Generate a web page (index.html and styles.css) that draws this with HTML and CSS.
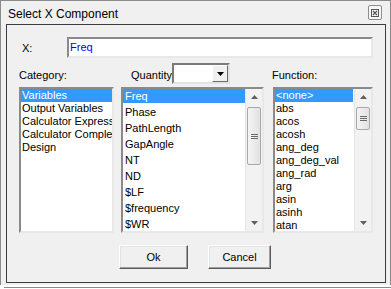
FILE: index.html
```html
<!DOCTYPE html>
<html lang="en">
<head>
  <meta charset="UTF-8">
  <title>Select X Component</title>
  <link rel="stylesheet" href="styles.css">
</head>
<body>
  <div class="window">
    <div class="titlebar">
      <span class="title">Select X Component</span>
      <span class="close">
        <svg width="8" height="8" viewBox="0 0 8 8">
          <rect x="0.5" y="0.5" width="7" height="7" fill="none" stroke="#555"/>
          <path d="M2 2 L6 6 M6 2 L2 6" stroke="#555" stroke-width="1.2"/>
        </svg>
      </span>
    </div>
    <div class="panel">
      <div class="x-row">
        <span class="x-label">X:</span>
        <div class="field">Freq</div>
      </div>
      <div class="grid">
        <div class="lbl">Category:</div>
        <div class="lbl qty-lbl">
          <span class="qty-text">Quantity</span>
          <div class="combo">
            <span class="combo-val"></span>
            <span class="combo-btn">
              <svg width="7" height="4" viewBox="0 0 7 4"><path d="M0 0 H7 L3.5 4 Z" fill="#000"/></svg>
            </span>
          </div>
        </div>
        <div class="lbl fn-lbl">Function:</div>

        <div class="list cat-list">
          <div class="items">
            <div class="item sel">Variables</div>
            <div class="item">Output Variables</div>
            <div class="item">Calculator Expressions</div>
            <div class="item">Calculator Complex</div>
            <div class="item">Design</div>
          </div>
        </div>

        <div class="list qty-list">
          <div class="items">
            <div class="item sel">Freq</div>
            <div class="item">Phase</div>
            <div class="item">PathLength</div>
            <div class="item">GapAngle</div>
            <div class="item">NT</div>
            <div class="item">ND</div>
            <div class="item">$LF</div>
            <div class="item">$frequency</div>
            <div class="item">$WR</div>
          </div>
          <div class="scrollbar">
            <span class="arrow up"><svg width="7" height="4" viewBox="0 0 7 4"><path d="M0 4 H7 L3.5 0 Z" fill="#606060"/></svg></span>
            <div class="track">
              <div class="thumb qty-thumb"><span class="grip"></span></div>
            </div>
            <span class="arrow"><svg width="7" height="4" viewBox="0 0 7 4"><path d="M0 0 H7 L3.5 4 Z" fill="#606060"/></svg></span>
          </div>
        </div>

        <div class="list fn-list">
          <div class="items">
            <div class="item sel">&lt;none&gt;</div>
            <div class="item">abs</div>
            <div class="item">acos</div>
            <div class="item">acosh</div>
            <div class="item">ang_deg</div>
            <div class="item">ang_deg_val</div>
            <div class="item">ang_rad</div>
            <div class="item">arg</div>
            <div class="item">asin</div>
            <div class="item">asinh</div>
            <div class="item">atan</div>
          </div>
          <div class="scrollbar">
            <span class="arrow up"><svg width="7" height="4" viewBox="0 0 7 4"><path d="M0 4 H7 L3.5 0 Z" fill="#606060"/></svg></span>
            <div class="track">
              <div class="thumb fn-thumb"><span class="grip"></span></div>
            </div>
            <span class="arrow"><svg width="7" height="4" viewBox="0 0 7 4"><path d="M0 0 H7 L3.5 4 Z" fill="#606060"/></svg></span>
          </div>
        </div>
      </div>
      <div class="buttons">
        <button class="btn ok">Ok</button>
        <button class="btn cancel">Cancel</button>
      </div>
    </div>
  </div>
  <div class="bottom-line"></div>
</body>
</html>
```

FILE: styles.css
```css
* {
  box-sizing: border-box;
}
body {
  margin: 0;
  width: 391px;
  height: 289px;
  background: #ffffff;
  font-family: 'Liberation Sans', Arial, sans-serif;
  font-size: 11px;
  color: #000;
  overflow: hidden;
}
.window {
  width: 391px;
  height: 285px;
  border: 1px solid #8a8a8a;
  border-bottom: none;
  background: #f0f0f0;
  padding: 0 4px 2px 5px;
}
.titlebar {
  height: 23px;
  display: flex;
  align-items: flex-start;
  justify-content: space-between;
  padding: 0 3px 0 2px;
}
.title {
  font-size: 12px;
  padding-top: 6px;
}
.close {
  width: 14px;
  height: 15px;
  border: 1px solid #8c8c8c;
  border-radius: 2px;
  background: #f7f7f7;
  display: flex;
  align-items: center;
  justify-content: center;
  margin: 4px 1px 0 0;
}
.panel {
  width: 380px;
  height: 259px;
  border: 1px solid #3c3c3c;
  background: #f0f0f0;
  padding: 12px 11px 13px 12px;
}
.x-row {
  display: flex;
  align-items: center;
  height: 21px;
}
.x-label {
  width: 48px;
  padding-left: 3px;
}
.field {
  width: 306px;
  height: 21px;
  background: #fff;
  border: 2px solid;
  border-color: #8a8a8a #e8e8e8 #e8e8e8 #8a8a8a;
  color: #0000ff;
  padding: 2px 1px;
  line-height: 13px;
}
.grid {
  display: grid;
  grid-template-columns: 102px 152px 100px;
  grid-template-rows: 21px 146px;
  row-gap: 3px;
  margin-top: 5px;
}
.lbl {
  padding-top: 6px;
  line-height: 13px;
}
.qty-lbl {
  display: flex;
  padding: 0 0 0 10px;
  align-items: flex-start;
}
.qty-text {
  width: 41px;
  padding-top: 6px;
  line-height: 13px;
}
.fn-lbl {
  margin-left: -1px;
}
.combo {
  width: 58px;
  height: 21px;
  display: flex;
  background: #fff;
  border: 2px solid;
  border-color: #7a7a7a #e3e3e3 #e3e3e3 #7a7a7a;
}
.combo-val {
  flex: 1;
}
.combo-btn {
  width: 16px;
  background: #f0f0f0;
  border: 1px solid;
  border-color: #fff #6a6a6a #6a6a6a #fff;
  display: flex;
  align-items: center;
  justify-content: center;
}
.list {
  display: flex;
  background: #fff;
  border: 2px solid;
  border-color: #8a8a8a #e8e8e8 #e8e8e8 #8a8a8a;
  overflow: hidden;
}
.cat-list {
  width: 95px;
}
.qty-list {
  width: 143px;
}
.items {
  flex: 1;
  overflow: hidden;
}
.item {
  height: 13px;
  line-height: 13px;
  padding-left: 1px;
  white-space: nowrap;
}
.qty-list .items {
  margin-top: -1px;
}
.qty-list .item {
  height: 16px;
  line-height: 16px;
  padding-left: 2px;
}
.item.sel {
  background: #3399ff;
  color: #fff;
}
.qty-list .item.sel {
  background: linear-gradient(#3399ff, #3399ff) 0 1px / 100% 14px no-repeat;
}
.fn-list .item.sel {
  margin-right: 1px;
}
.scrollbar {
  width: 17px;
  display: flex;
  flex-direction: column;
  background: #f2f2f2;
  border-left: 1px solid #e4e4e4;
}
.arrow {
  height: 16px;
  display: flex;
  align-items: center;
  justify-content: center;
}
.track {
  flex: 1;
}
.thumb {
  margin: 0 1px;
  border: 1px solid #a8a8a8;
  border-radius: 2px;
  background: linear-gradient(to right, #f4f4f4, #e2e2e2);
  display: flex;
  align-items: center;
  justify-content: center;
}
.qty-thumb {
  height: 58px;
  margin-top: 2px;
}
.fn-thumb {
  height: 23px;
  margin-top: 2px;
}
.grip {
  width: 7px;
  height: 5px;
  border-top: 1px solid #6a6a6a;
  border-bottom: 1px solid #6a6a6a;
  background: linear-gradient(#6a6a6a, #6a6a6a) center / 7px 1px no-repeat;
}
.buttons {
  display: flex;
  gap: 20px;
  margin-top: 12px;
  padding-left: 100px;
}
.btn {
  height: 24px;
  font-family: 'Liberation Sans', Arial, sans-serif;
  font-size: 11px;
  color: #000;
  background: #f0f0f0;
  border: 1px solid;
  border-color: #fff #5a5a5a #5a5a5a #fff;
  box-shadow: inset -1px -1px #a0a0a0, inset 1px 1px #e3e3e3;
  padding: 0;
}
.ok {
  width: 69px;
}
.cancel {
  width: 63px;
}
.bottom-line {
  height: 1px;
  margin: 2px 0 0 4px;
  background: #8a8a8a;
}
```
